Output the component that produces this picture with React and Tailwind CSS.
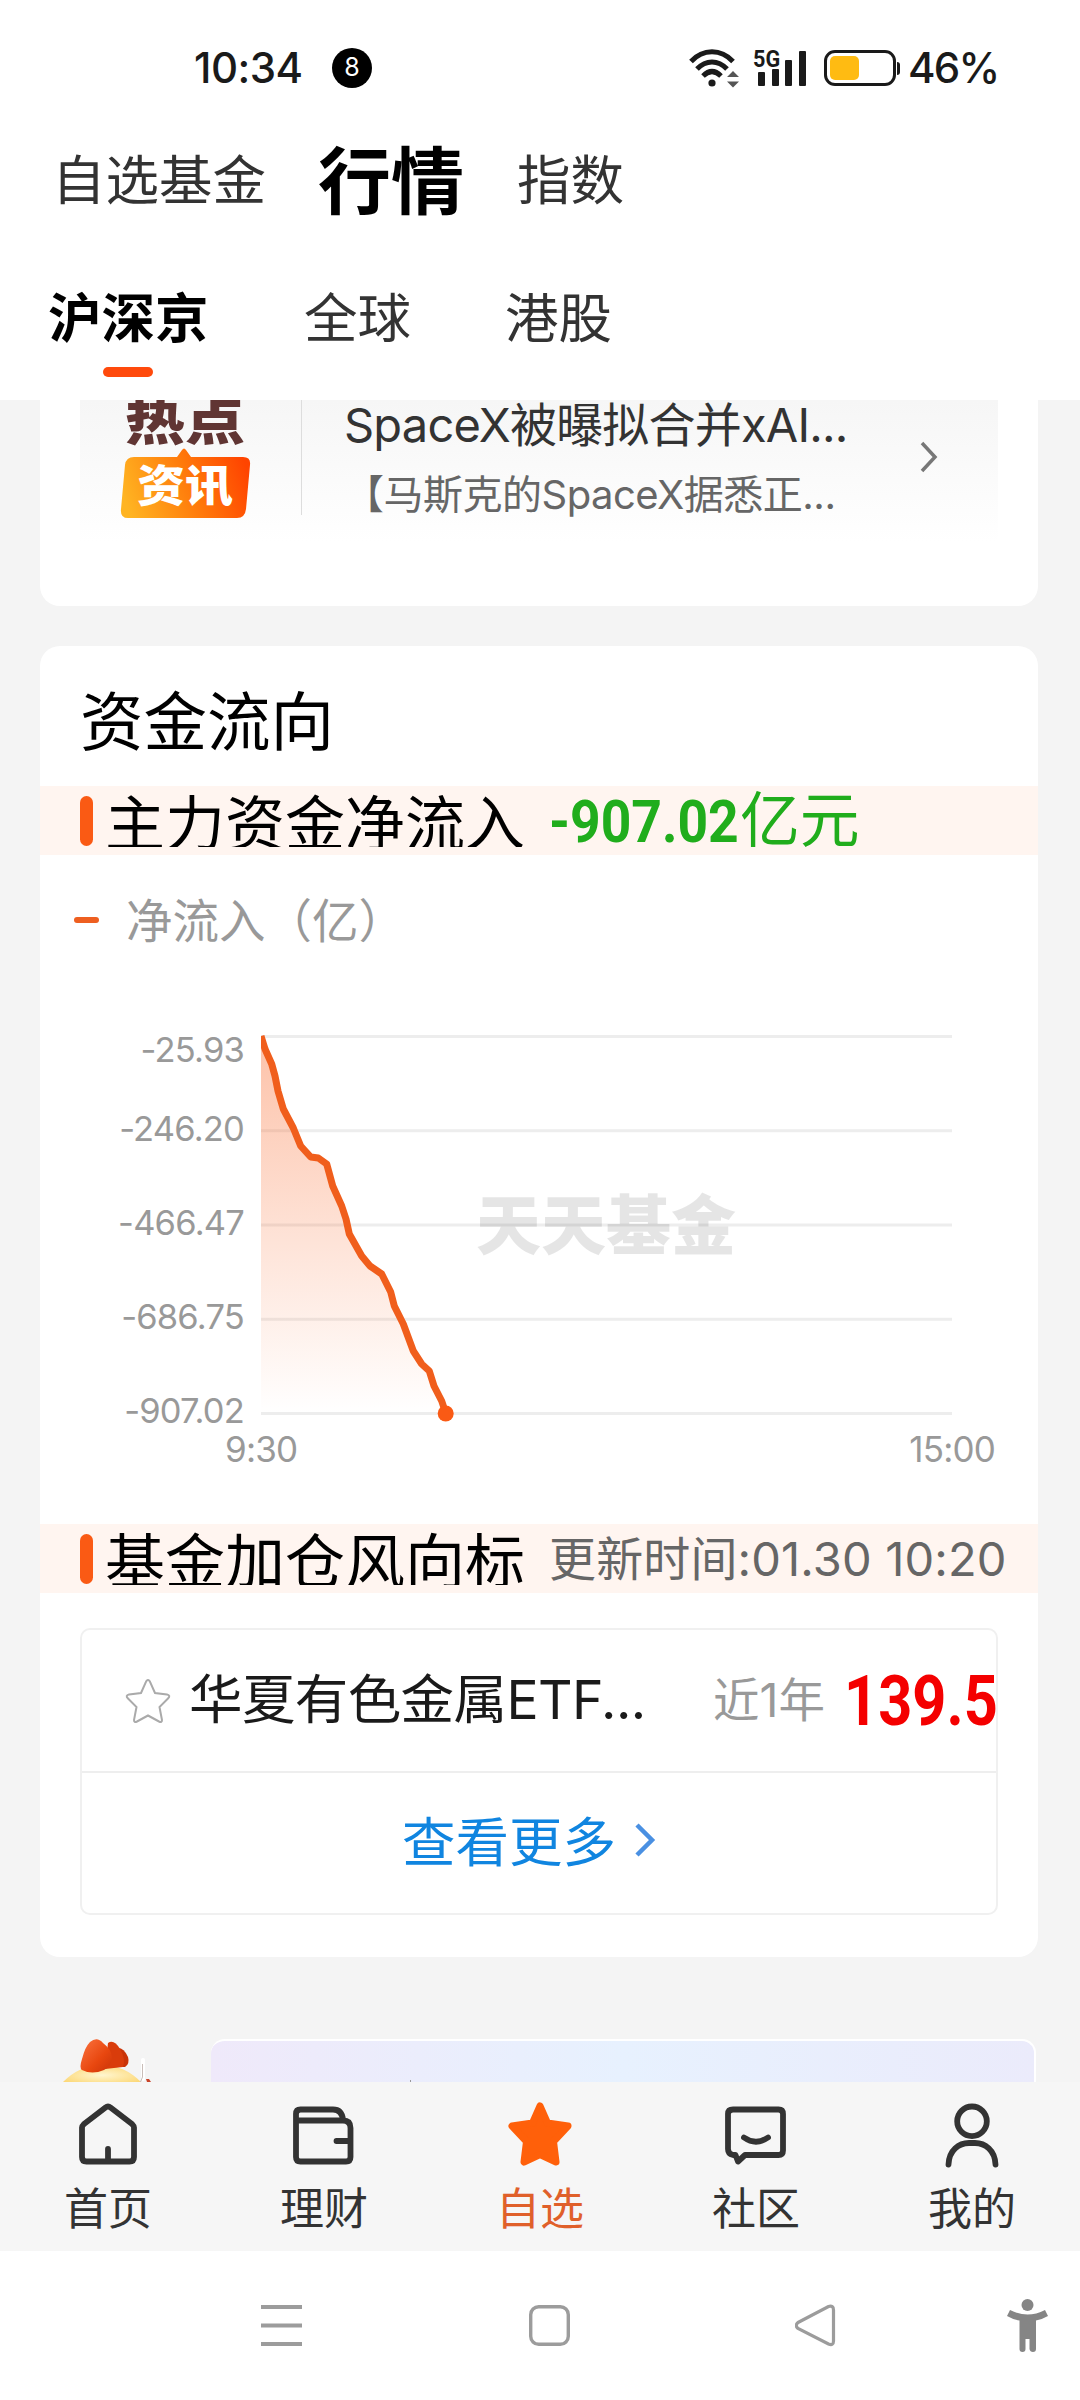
import React from "react";

const grid = [
  { label: "-25.93", y: 3.5 },
  { label: "-246.20", y: 97.8 },
  { label: "-466.47", y: 192 },
  { label: "-686.75", y: 286.3 },
  { label: "-907.02", y: 380.5 },
];

const points =
  "0,3 4,16 10.7,31 14,43 17,58 22.3,76 32.3,95 39.7,113 49.7,124 57.3,125 65.7,131 71.7,153 80.7,173 85,186 88.3,201 100.7,223 109,233 120.7,241 129.7,259 133.3,273 142.3,291 152.3,318 160.7,331 168.3,338 173,353 180.7,368 184.7,380";

function StatusBar() {
  return (
    <div className="flex h-[136px] items-center pl-[194px] text-[#1a1a1a]">
      <span className="w-[138px] whitespace-nowrap text-[42px] font-medium leading-none tracking-[-0.5px]">
        10:34
      </span>
      <span className="flex h-10 w-10 items-center justify-center rounded-full bg-black text-[25px] text-white">
        8
      </span>
      <svg className="ml-[316px]" width="52" height="40" viewBox="0 0 52 40">
        <g fill="none" stroke="#1a1a1a" strokeWidth="5">
          <path d="M3 13.5C15 .5 33 .5 45 13.5" />
          <path d="M9 21C18 11.500 30 11.500 39 21" />
          <path d="M15 28C21 22 27 22 33 28" />
        </g>
        <circle cx="24" cy="35" r="3.600" fill="#1a1a1a" />
        <path d="M39 29h12l-6-6zM39 33.500h12l-6 6z" fill="#555" />
      </svg>
      <div className="relative ml-[13px] flex h-9 w-[54px] items-end gap-[6.5px] pl-[5px]">
        <i className="h-[14px] w-[7px] rounded-[1px] bg-[#1a1a1a]" />
        <i className="h-[17px] w-[7px] rounded-[1px] bg-[#1a1a1a]" />
        <i className="h-[26px] w-[7px] rounded-[1px] bg-[#1a1a1a]" />
        <i className="h-[35px] w-[7px] rounded-[1px] bg-[#1a1a1a]" />
        <span className="absolute left-0 -top-[2px] origin-left scale-x-90 font-[Roboto] text-[24px] font-bold leading-[23px]">
          5G
        </span>
      </div>
      <div className="ml-[17px] flex items-center">
        <div className="h-9 w-[72px] rounded-[11px] border-[3px] border-[#1a1a1a] p-[3px]">
          <div className="h-6 w-[29px] rounded-[5px] bg-[#ffbb12]" />
        </div>
        <i className="ml-[1px] h-[13px] w-[3px] rounded-r bg-[#1a1a1a]" />
      </div>
      <span className="ml-[8px] text-[42px] font-medium leading-none tracking-[-1.7px]">
        46%
      </span>
    </div>
  );
}

function Header() {
  return (
    <header className="h-[400px] bg-white">
      <StatusBar />
      <nav className="flex h-[90px] items-center whitespace-nowrap pl-[52px] text-[53.5px] leading-none text-[#333]">
        <span className="w-[266px]">自选基金</span>
        <span className="w-[199px] text-[73px] font-bold text-black">行情</span>
        <span>指数</span>
      </nav>
      <nav className="mt-[48px] flex h-[90px] items-center whitespace-nowrap pl-[48px] text-[53.5px] leading-none text-[#333]">
        <span className="w-[256px] font-bold text-black">沪深京</span>
        <span className="w-[201px]">全球</span>
        <span>港股</span>
      </nav>
      <div className="ml-[103px] mt-[3px] h-[10px] w-[50px] rounded-full bg-[#ff4a0c]" />
    </header>
  );
}

function NewsCard() {
  return (
    <section className="mx-auto h-[206px] w-[998px] rounded-b-[20px] bg-white px-10">
      <div className="flex h-[143px] bg-gradient-to-b from-[#f6f6f6] to-white">
        <div className="relative h-[120px] w-[221px] overflow-hidden">
          <span className="absolute -top-[13px] left-[45px] origin-bottom scale-y-[0.86] whitespace-nowrap text-[60px] font-black leading-[60px] text-[#603533]">
            热点
          </span>
          <svg className="absolute left-10 top-[47px]" width="132" height="72" viewBox="0 0 132 72">
            <defs>
              <linearGradient id="hot" x1="0" x2="1" y1="0.6" y2="0.4">
                <stop offset="0" stopColor="#ffb422" />
                <stop offset="0.5" stopColor="#ff7d0c" />
                <stop offset="1" stopColor="#ff4400" />
              </linearGradient>
            </defs>
            <path
              d="M14 10H57L62 3Q64 0 66 3L71 10H123Q131 10 130 18L126 62Q125 71 117 71H8Q0 71 1 62L5 18Q6 10 14 10Z"
              fill="url(#hot)"
            />
          </svg>
          <span className="absolute left-[57px] top-[61px] scale-y-[0.92] whitespace-nowrap text-[48px] font-black leading-[49px] text-white">
            资讯
          </span>
        </div>
        <i className="h-[115px] w-px bg-[#ddd]" />
        <div className="w-[540px] whitespace-nowrap pl-[42px]">
          <p className="-mt-[1px] text-[47px] leading-[52px] tracking-[-0.8px] text-[#333]">
            SpaceX被曝拟合并xAI...
          </p>
          <p className="mt-[17px] text-[40px] leading-[54px] tracking-[-0.5px] text-[#666]">
            【马斯克的SpaceX据悉正...
          </p>
        </div>
        <svg className="ml-[77px] mt-[40px]" width="20" height="34" viewBox="0 0 20 34">
          <path d="M3 3L16 17L3 31" fill="none" stroke="#777" strokeWidth="3.500" />
        </svg>
      </div>
    </section>
  );
}

function Band({ title, children }) {
  return (
    <div className="flex h-[69px] items-center whitespace-nowrap bg-[#fff5f0] pl-10">
      <i className="h-[50px] w-[13px] rounded-full bg-[#fa5a14]" />
      <div className="ml-[12px] h-[53px] w-[444px] overflow-hidden text-[60px] leading-[60px] text-black">
        {title}
      </div>
      {children}
    </div>
  );
}

function FlowChart() {
  return (
    <div className="mt-[86px] pl-[60px]">
      <div className="flex">
        <div className="flex w-[144px] flex-col items-end text-[34.500px] leading-[34px] tracking-[-0.8px] text-[#999]">
          {grid.map((g, i) => (
            <span key={g.label} className={i === 0 ? "-mt-[1px] mb-[45px]" : "mb-[60px] last:mb-0"}>
              {g.label}
            </span>
          ))}
        </div>
        <div className="relative -mt-[1px] ml-[17px] h-[390px] w-[692px]">
          <svg width="692" height="390" viewBox="0 0 692 390">
            <defs>
              <linearGradient id="area" x1="0" x2="0" y1="0" y2="1">
                <stop offset="0" stopColor="#f95e1c" stopOpacity="0.38" />
                <stop offset="1" stopColor="#f95e1c" stopOpacity="0" />
              </linearGradient>
            </defs>
            {grid.map((g) => (
              <path key={g.y} d={`M0 ${g.y}H691`} stroke="#ededed" strokeWidth="3" />
            ))}
            <polygon points={`0,3 ${points} 0,380`} fill="url(#area)" />
            <polyline points={points} fill="none" stroke="#f05e1c" strokeWidth="7" strokeLinejoin="round" />
            <circle cx="184.700" cy="380.500" r="8" fill="#fa5a14" />
          </svg>
          <span className="absolute left-[215px] top-[160px] whitespace-nowrap text-[65px] font-black leading-[65px] text-black/10">
            天天基金
          </span>
        </div>
      </div>
      <div className="mt-[4px] flex w-[770px] justify-between pl-[125px] text-[35px] leading-[34px] tracking-[-0.8px] text-[#999]">
        <span>9:30</span>
        <span className="-mr-[125px]">15:00</span>
      </div>
    </div>
  );
}

function FundBox() {
  return (
    <div className="mx-10 mt-[35px] h-[287px] rounded-[10px] border-2 border-[#f0f0f0]">
      <div className="flex h-[143px] items-center whitespace-nowrap border-b-2 border-[#eee] pl-[41px]">
        <svg className="shrink-0" width="50" height="48" viewBox="0 0 50 48">
          <path
            d="M25 3Q26.500 3 27.500 6L32 16L44 17.500Q48 18.500 45 21.500L36.500 30L39 43Q39 46 36 44.500L25 38.500L14 44.500Q11 46 11 43L13.500 30L5 21.500Q2 18.500 6 17.500L18 16L22.500 6Q23.500 3 25 3Z"
            fill="none"
            stroke="#aaa"
            strokeWidth="2"
          />
        </svg>
        <span className="ml-[16px] w-[524px] shrink-0 text-[53.500px] tracking-[-0.6px] text-[#1a1a1a]">
          华夏有色金属ETF...
        </span>
        <span className="w-[131px] shrink-0 text-[46.500px] text-[#999]">近1年</span>
        <span className="w-[151px] shrink-0 origin-left scale-x-[0.85] font-[Roboto] text-[70px] font-bold leading-none text-[#f40000]">
          139.5
        </span>
      </div>
      <div className="flex h-[140px] items-center justify-center gap-[18px] pr-[20px] text-[53.500px] text-[#1085e0]">
        查看更多
        <svg className="-mt-[6px]" width="22" height="36" viewBox="0 0 22 36">
          <path d="M3 3L18 18L3 33" fill="none" stroke="#4a90e2" strokeWidth="4.500" />
        </svg>
      </div>
    </div>
  );
}

function FlowCard() {
  return (
    <section className="mx-auto mt-10 h-[1311px] w-[998px] rounded-[20px] bg-white">
      <h2 className="h-[140px] pl-10 pt-[43px] text-[63.500px] leading-[66px] text-black">资金流向</h2>
      <Band title="主力资金净流入">
        <span className="w-[191px] origin-left scale-x-[0.905] pt-[2px] font-[Roboto] text-[59px] font-bold leading-none text-[#20ad1c]">
          -907.02
        </span>
        <span className="text-[59.800px] leading-none text-[#20ad1c]">亿元</span>
      </Band>
      <div className="mt-[39px] flex h-[54px] items-center pl-[34px] text-[46.500px] leading-none text-[#999]">
        <i className="mb-[2px] mr-[27px] h-[6px] w-[25px] rounded-full bg-[#ee5f20]" />
        净流入（亿）
      </div>
      <div className="h-[576px] overflow-hidden">
        <FlowChart />
      </div>
      <Band title="基金加仓风向标">
        <span className="text-[47px] leading-none tracking-[0.15px] text-[#666]">更新时间:01.30 10:20</span>
      </Band>
      <FundBox />
    </section>
  );
}

function Promo() {
  return (
    <div className="mt-[82px] flex h-[43px] overflow-hidden pl-[60px]">
      <svg width="151" height="43" viewBox="0 0 151 43">
        <defs>
          <linearGradient id="comb" x1="0" x2="1" y1="0" y2="1">
            <stop offset="0" stopColor="#fb7440" />
            <stop offset="0.6" stopColor="#e8470f" />
            <stop offset="1" stopColor="#c93308" />
          </linearGradient>
          <radialGradient id="head" cx="0.5" cy="0.6" r="0.6">
            <stop offset="0" stopColor="#fff6cf" />
            <stop offset="1" stopColor="#fcd878" />
          </radialGradient>
        </defs>
        <path d="M3 43Q20 26 42 26Q64 26 81 43Z" fill="url(#head)" />
        <path d="M58 9Q64 9 68 18Q70 25 65 28L50 28Z" fill="#c93308" />
        <path d="M48 4Q54 0 60 10Q66 20 63 28L45 30Z" fill="#d93c0b" />
        <path d="M30 3Q37-3 43 4Q51 10 52 18Q52 27 44 31Q32 36 22 31Q19 29 22 20Q25 8 30 3Z" fill="url(#comb)" />
        <rect x="81" y="19" width="4" height="23" rx="2" fill="#fff" />
        <path d="M82.500 25v13l-2 5" fill="none" stroke="#c9bdb8" />
        <path d="M86 40h3l2 3h-4z" fill="#c9442a" />
      </svg>
      <div className="h-20 w-[825px] rounded-[14px] border-t-2 border-r-2 border-white bg-gradient-to-r from-[#efe9fa] via-[#e7f1fe] to-[#ebebfb]">
        <i className="ml-[199px] mt-[39px] block h-[3px] w-px bg-[#999]" />
      </div>
    </div>
  );
}

const tabs = [
  {
    name: "首页",
    icon: (
      <path d="M35 61V49M9 27.500V57Q9 61.500 13.500 61.500H56.500Q61 61.500 61 57V27.500Q61 26 59 24L37.500 7.500Q35 5.500 32.500 7.500L11 24Q9 26 9 27.500Z" />
    ),
  },
  {
    name: "理财",
    icon: (
      <path d="M7 20V57Q7 61.500 11.500 61.500H57Q61.500 61.500 61.500 57V28Q61.500 20.500 54 20.500H7V14Q7 9.500 11.500 9.500H44Q53 9.500 54 20M61 41H47.500" />
    ),
  },
  {
    name: "自选",
    active: true,
    icon: (
      <path
        d="M35 6L42.500 23L63 26L48.500 41.500L51 62L35 54.500L19 62L21.500 41.500L7 26L27.500 23Z"
        fill="#ff600a"
        stroke="#ff600a"
        strokeWidth="7"
      />
    ),
  },
  {
    name: "社区",
    icon: (
      <path d="M12 9.500H57.500Q62 9.500 62 14V50.500Q62 55 57.500 55H24L17 61.500L14.500 55H12Q7 54 7 49V14Q7 9.500 12 9.500ZM23 37.500Q35 46 47 37.500" />
    ),
  },
  {
    name: "我的",
    icon: (
      <path d="M35 6.500a14.800 14.800 0 1 1 0 29.600a14.800 14.800 0 1 1 0-29.600M11.500 64.500C12 50 22 43 32 43H38C48 43 58 50 58.500 64.500" />
    ),
  },
];

function TabBar() {
  return (
    <nav className="grid h-[169px] grid-cols-5 bg-[#f6f6f6]">
      {tabs.map((tab) => (
        <div
          key={tab.name}
          className={`flex flex-col items-center pt-[18px] text-[44px] leading-[54px] ${tab.active ? "text-[#e0602a]" : "text-[#333]"}`}
        >
          <svg
            width="70"
            height="70"
            viewBox="0 0 70 70"
            fill="none"
            stroke="#333"
            strokeWidth="5.800"
            strokeLinecap="round"
            strokeLinejoin="round"
          >
            {tab.icon}
          </svg>
          <span className="mt-[12px]">{tab.name}</span>
        </div>
      ))}
    </nav>
  );
}

function SystemNav() {
  return (
    <div className="flex h-[149px] items-start bg-white pl-[261px] pt-[48px]">
      <svg width="41" height="56" viewBox="0 0 41 56" stroke="#9c9c9c" strokeWidth="4">
        <path d="M0 8H41M0 26.500H41M0 45H41" />
      </svg>
      <svg className="ml-[227px]" width="41" height="56" viewBox="0 0 41 56">
        <rect x="1.700" y="7.700" width="37.600" height="37.600" rx="8" fill="none" stroke="#9c9c9c" strokeWidth="3.400" />
      </svg>
      <svg className="ml-[225px]" width="42" height="56" viewBox="0 0 42 56">
        <path
          d="M3 23.500L33.500 7.500Q38.500 6 38.500 11V42Q38.500 47 33.500 45L3 29.500Q-.5 26.500 3 23.500Z"
          fill="none"
          stroke="#9c9c9c"
          strokeWidth="3.200"
        />
      </svg>
      <svg className="ml-[170px]" width="42" height="56" viewBox="0 0 42 56" fill="#858585">
        <circle cx="20.500" cy="6" r="6" />
        <path d="M3 11Q20.500 20 38 11L41 17Q36 20 29 21.500V50Q29 53 26 53T22.500 50V40H18.500V50Q18.500 53 15.500 53T12.500 50V21.500Q6 20.500 0 17Z" />
      </svg>
    </div>
  );
}

export default function App() {
  return (
    <main className="h-[2400px] w-[1080px] overflow-hidden bg-[#f4f4f4] font-['Inter','Noto_Sans_CJK_SC',sans-serif]">
      <Header />
      <div className="pr-[2px]">
        <NewsCard />
        <FlowCard />
      </div>
      <Promo />
      <TabBar />
      <SystemNav />
    </main>
  );
}
